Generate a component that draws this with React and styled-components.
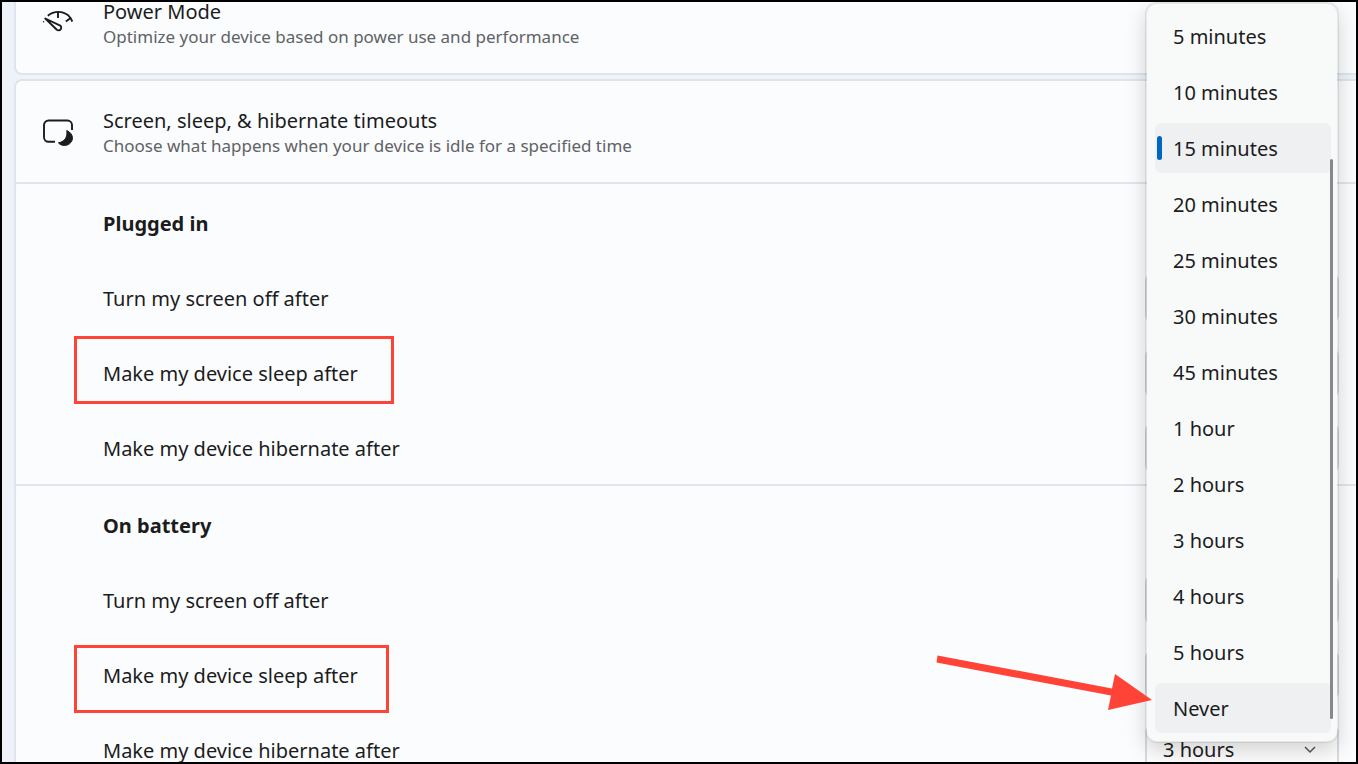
import React from "react";
import styled, { createGlobalStyle } from "styled-components";

const GlobalStyle = createGlobalStyle`
  * { box-sizing: border-box; }
  body {
    margin: 0;
    font-family: "Noto Sans", "Open Sans", sans-serif;
    font-size: 20px;
    color: #1b1c1d;
  }
`;

const Frame = styled.div`
  position: relative;
  height: 100vh;
  overflow: hidden;
  border: 2px solid #000;
  background: linear-gradient(#edf3f9, #eff2fa);
`;

const Cards = styled.main`
  display: flex;
  flex-direction: column;
  gap: 4px;
  margin-top: -32px;
  padding-left: 12px;
`;

const Card = styled.section`
  border: 2px solid #dfe5ea;
  border-right: 0;
  border-radius: 8px 0 0 8px;
  background: #fbfcfe;
`;

const CardHeader = styled.header`
  display: flex;
  align-items: center;
  gap: 30px;
  height: 101px;
  padding: 3px 0 0 27px;
`;

const Icon = styled.svg`
  width: 30px;
  height: 30px;
  flex: none;
  overflow: visible;
`;

const Title = styled.h2`
  margin: 0;
  font-size: 20px;
  font-weight: 400;
  line-height: 26px;
`;

const Description = styled.p`
  margin: 0;
  font-size: 17px;
  line-height: 24px;
  color: #606264;
`;

const Group = styled.div`
  border-top: 2px solid #dfe5ea;
`;

const GroupTitle = styled.h3`
  display: flex;
  align-items: center;
  height: 75px;
  margin: 0;
  padding: 4px 0 0 87px;
  font-size: 20px;
  font-weight: 700;
`;

const Row = styled.div`
  display: flex;
  align-items: center;
  justify-content: space-between;
  height: 75px;
  padding: 3px 17px 0 87px;
`;

const SelectWrap = styled.div`
  position: relative;
  width: 194px;
`;

const Select = styled.select`
  appearance: none;
  display: block;
  width: 100%;
  height: 50px;
  padding: 0 16px 2px;
  border: 2px solid #d9dcdf;
  border-radius: 8px;
  background: #fdfdfe;
  color: inherit;
  font: inherit;
`;

const Chevron = styled.svg`
  position: absolute;
  right: 23px;
  top: 21px;
  width: 12px;
  height: 8px;
  pointer-events: none;
`;

const Menu = styled.div`
  position: absolute;
  top: 0;
  right: 17px;
  display: flex;
  flex-direction: column;
  gap: 6px;
  width: 194px;
  padding: 7px 6px 8px 8px;
  border: 2px solid rgba(0, 0, 0, 0.08);
  border-radius: 12px;
  background: #f8fafa;
  background-clip: padding-box;
  box-shadow: 0 8px 20px rgba(0, 0, 0, 0.16);
`;

const Option = styled.button`
  display: flex;
  align-items: center;
  height: 50px;
  padding: 0 0 0 ${(p) => (p.$current ? "2px" : "18px")};
  gap: 11px;
  border: 0;
  border-radius: 6px;
  background: ${(p) => (p.$shaded ? "#eff0f1" : "transparent")};
  color: inherit;
  font: inherit;
  text-align: left;
`;

const Marker = styled.span`
  width: 5px;
  height: 24px;
  border-radius: 3px;
  background: #0067c0;
`;

const ScrollThumb = styled.div`
  position: absolute;
  top: 155px;
  right: 4px;
  width: 3px;
  height: 560px;
  border-radius: 2px;
  background: #868889;
`;

const Highlight = styled.div`
  position: absolute;
  left: 72px;
  top: ${(p) => p.$top}px;
  width: ${(p) => p.$width}px;
  height: 68px;
  border: 3px solid #ff4336;
  pointer-events: none;
`;

const Arrow = styled.svg`
  position: absolute;
  right: 203px;
  top: 650px;
  width: 218px;
  height: 62px;
  pointer-events: none;
`;

const delays = [
  "5 minutes", "10 minutes", "15 minutes", "20 minutes", "25 minutes",
  "30 minutes", "45 minutes", "1 hour", "2 hours", "3 hours", "4 hours",
  "5 hours", "Never",
];

const groups = [
  {
    id: "plugged",
    title: "Plugged in",
    rows: [
      ["Turn my screen off after", "5 minutes"],
      ["Make my device sleep after", "15 minutes"],
      ["Make my device hibernate after", "3 hours"],
    ],
  },
  {
    id: "battery",
    title: "On battery",
    rows: [
      ["Turn my screen off after", "5 minutes"],
      ["Make my device sleep after", "15 minutes"],
      ["Make my device hibernate after", "3 hours"],
    ],
  },
];

function GaugeIcon() {
  return (
    <Icon viewBox="0 0 30 30" fill="none" stroke="#1b1c1d" strokeWidth="1.9" strokeLinejoin="round" aria-hidden="true">
      <path d="M4.800 6.800C11 1.600 19.500 1.600 25.500 6.600q2.400 2.200 3.800 6" />
      <path d="M15 3v6M27.300 9.300l-4.500 3.200" />
      <path d="M2.300 9.500L17.200 16.600a2.700 2.700 0 0 1-3.400 4.200z" />
      <circle cx="0.600" cy="12.800" r="0.700" fill="#1b1c1d" stroke="none" />
    </Icon>
  );
}

function ScreenSleepIcon() {
  return (
    <Icon viewBox="0 0 30 30" fill="none" stroke="#1b1c1d" strokeWidth="1.900" aria-hidden="true">
      <path d="M12 23.800H5.500a4.500 4.500 0 0 1-4.500-4.500V7a4.500 4.500 0 0 1 4.500-4.500h19A4.500 4.500 0 0 1 29 7v5" />
      <path d="M23.800 12.600c7.500 3 7.500 12 .2 14.500-3.500 1-6.900-.1-8.600-2.300 6-.9 9.400-5.400 8.400-12.200z" fill="#1b1c1d" strokeWidth="1" strokeLinejoin="round" />
    </Icon>
  );
}

function TimeoutRow({ id, label, value }) {
  return (
    <Row>
      <label htmlFor={id}>{label}</label>
      <SelectWrap>
        <Select id={id} defaultValue={value}>
          {delays.map((d) => <option key={d}>{d}</option>)}
        </Select>
        <Chevron viewBox="0 0 12 8" fill="none" stroke="#55585a" strokeWidth="1.500" aria-hidden="true">
          <path d="M1 1l5 5 5-5" />
        </Chevron>
      </SelectWrap>
    </Row>
  );
}

export default function App() {
  return (
    <Frame>
      <GlobalStyle />
      <Cards>
        <Card>
          <CardHeader>
            <GaugeIcon />
            <div>
              <Title>Power Mode</Title>
              <Description>Optimize your device based on power use and performance</Description>
            </div>
          </CardHeader>
        </Card>
        <Card>
          <CardHeader>
            <ScreenSleepIcon />
            <div>
              <Title>Screen, sleep, &amp; hibernate timeouts</Title>
              <Description>Choose what happens when your device is idle for a specified time</Description>
            </div>
          </CardHeader>
          {groups.map((g) => (
            <Group key={g.id}>
              <GroupTitle>{g.title}</GroupTitle>
              {g.rows.map(([label, value], i) => (
                <TimeoutRow key={label} id={`${g.id}-${i}`} label={label} value={value} />
              ))}
            </Group>
          ))}
        </Card>
      </Cards>
      <Menu role="listbox" aria-label="Make my device sleep after">
        {delays.map((d) => {
          const current = d === "15 minutes";
          return (
            <Option key={d} type="button" role="option" aria-selected={current} $current={current} $shaded={current || d === "Never"}>
              {current && <Marker />}
              {d}
            </Option>
          );
        })}
        <ScrollThumb />
      </Menu>
      <Highlight $top={334} $width={320} />
      <Highlight $top={643} $width={315} />
      <Arrow viewBox="935 652 218 62" aria-hidden="true">
        <path d="M937.500 655.500L1112 688.500L1115 674L1152 700L1108 710L1111 695.500L936.500 662.500z" fill="#ff4336" />
      </Arrow>
    </Frame>
  );
}
